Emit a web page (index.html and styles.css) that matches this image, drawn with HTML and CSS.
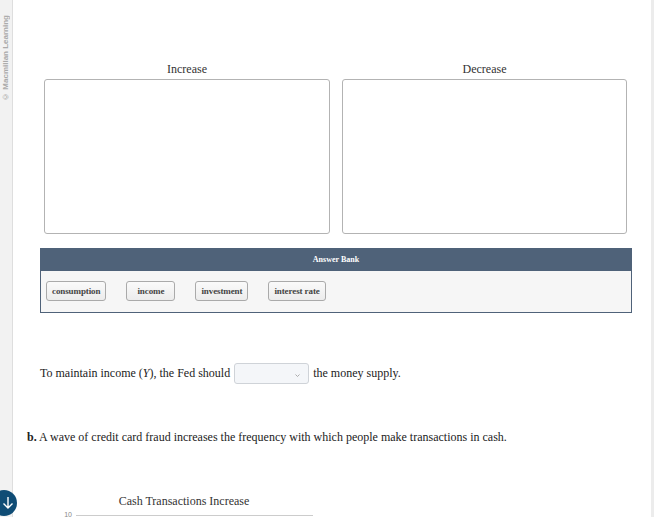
FILE: index.html
```html
<!DOCTYPE html>
<html lang="en">
<head>
    <meta charset="UTF-8">
    <title>Money Supply Question</title>
    <link rel="stylesheet" href="styles.css">
</head>
<body>
    <div class="page">
        <aside class="side">
            <span class="credit">&copy; Macmillan Learning</span>
        </aside>

        <main class="main">
            <div class="part-a">
                <div class="sort-cols">
                    <div class="sort-col">
                        <div class="col-label">Increase</div>
                        <div class="drop-box"></div>
                    </div>
                    <div class="sort-col">
                        <div class="col-label">Decrease</div>
                        <div class="drop-box"></div>
                    </div>
                </div>

                <div class="bank">
                    <div class="bank-head">Answer Bank</div>
                    <div class="bank-body">
                        <span class="chip">consumption</span>
                        <span class="chip">income</span>
                        <span class="chip">investment</span>
                        <span class="chip">interest rate</span>
                    </div>
                </div>

                <div class="fill-row">
                    <span>To maintain income (<i>Y</i>), the Fed should</span>
                    <span class="select">
                        <svg width="5" height="3" viewBox="0 0 5 3"><path d="M0.5 0.5 L2.5 2.5 L4.5 0.5" fill="none" stroke="#999" stroke-width="0.8"/></svg>
                    </span>
                    <span>the money supply.</span>
                </div>
            </div>

            <p class="part-b"><b>b.</b> A wave of credit card fraud increases the frequency with which people make transactions in cash.</p>

            <div class="chart">
                <div class="chart-title">Cash Transactions Increase</div>
                <div class="chart-axis">
                    <span class="tick">10</span>
                    <span class="grid-line"></span>
                </div>
            </div>
        </main>

        <div class="scroll-edge"></div>
    </div>

    <div class="jump-btn">
        <svg width="14" height="14" viewBox="0 0 14 14"><path d="M7 1 V12 M2.5 7.5 L7 12 L11.5 7.5" fill="none" stroke="#fff" stroke-width="1.4"/></svg>
    </div>
</body>
</html>
```

FILE: styles.css
```css
* {
    box-sizing: border-box;
}

body {
    margin: 0;
    font-family: "Liberation Serif", "Times New Roman", serif;
    font-size: 12px;
    color: #222;
    background: #fff;
    overflow: hidden;
}

.page {
    display: flex;
    min-height: 517px;
}

.side {
    width: 13px;
    flex-shrink: 0;
    background: #f2f2f2;
    border-right: 1px solid #dedede;
    padding-top: 15px;
}

.credit {
    display: block;
    writing-mode: vertical-rl;
    transform: rotate(180deg);
    font-family: "Liberation Sans", Arial, sans-serif;
    font-size: 8px;
    font-weight: bold;
    color: #aaa;
    line-height: 12px;
    white-space: nowrap;
}

.main {
    flex: 1;
    padding: 62px 0 0 14px;
}

.scroll-edge {
    width: 3px;
    flex-shrink: 0;
    background: #ececec;
}

.part-a {
    margin-left: 13px;
    width: 592px;
}

.sort-cols {
    display: grid;
    grid-template-columns: 286px 285px;
    gap: 12px;
    padding-left: 4px;
}

.col-label {
    text-align: center;
    line-height: 14px;
    margin-bottom: 3px;
    color: #333;
}

.drop-box {
    height: 155px;
    border: 1px solid #b3b3b3;
    border-radius: 3px;
}

.bank {
    margin-top: 14px;
}

.bank-head {
    height: 23px;
    line-height: 23px;
    background: #4f6279;
    color: #fff;
    text-align: center;
    font-size: 8px;
    font-weight: bold;
}

.bank-body {
    height: 42px;
    background: #f6f6f6;
    border: 1px solid #4f6279;
    border-top: none;
    padding: 10px 5px;
    display: flex;
    gap: 20px;
}

.chip {
    height: 20px;
    min-width: 49px;
    line-height: 18px;
    padding: 0 5px;
    border: 1px solid #aaa;
    border-radius: 3px;
    background: linear-gradient(#fafafa, #ececec);
    font-size: 9px;
    font-weight: bold;
    color: #444;
    text-align: center;
    letter-spacing: -0.1px;
}

.fill-row {
    margin-top: 50px;
    display: flex;
    align-items: center;
    gap: 4px;
}

.select {
    width: 75px;
    height: 21px;
    border: 1px solid #cfd3d8;
    border-radius: 3px;
    background: #f4f6f9;
    display: flex;
    justify-content: flex-end;
    align-items: flex-end;
    padding: 0 8px 6px 0;
}

.select svg {
    display: block;
}

.part-b {
    margin: 46px 0 0;
    line-height: 14px;
}

.chart {
    margin: 50px 0 0 28px;
    width: 258px;
}

.chart-title {
    text-align: center;
    line-height: 14px;
    color: #333;
}

.chart-axis {
    display: flex;
    align-items: center;
    margin-top: 3px;
    gap: 4px;
}

.tick {
    font-family: "Liberation Sans", Arial, sans-serif;
    font-size: 7px;
    line-height: 8px;
    color: #888;
    width: 17px;
    text-align: right;
}

.grid-line {
    flex: 1;
    height: 1px;
    background: #ccc;
}

.jump-btn {
    position: fixed;
    left: -9px;
    top: 490px;
    width: 26px;
    height: 26px;
    border-radius: 50%;
    background: #0f4c75;
    display: flex;
    align-items: center;
    justify-content: center;
    padding-left: 8px;
}
```
